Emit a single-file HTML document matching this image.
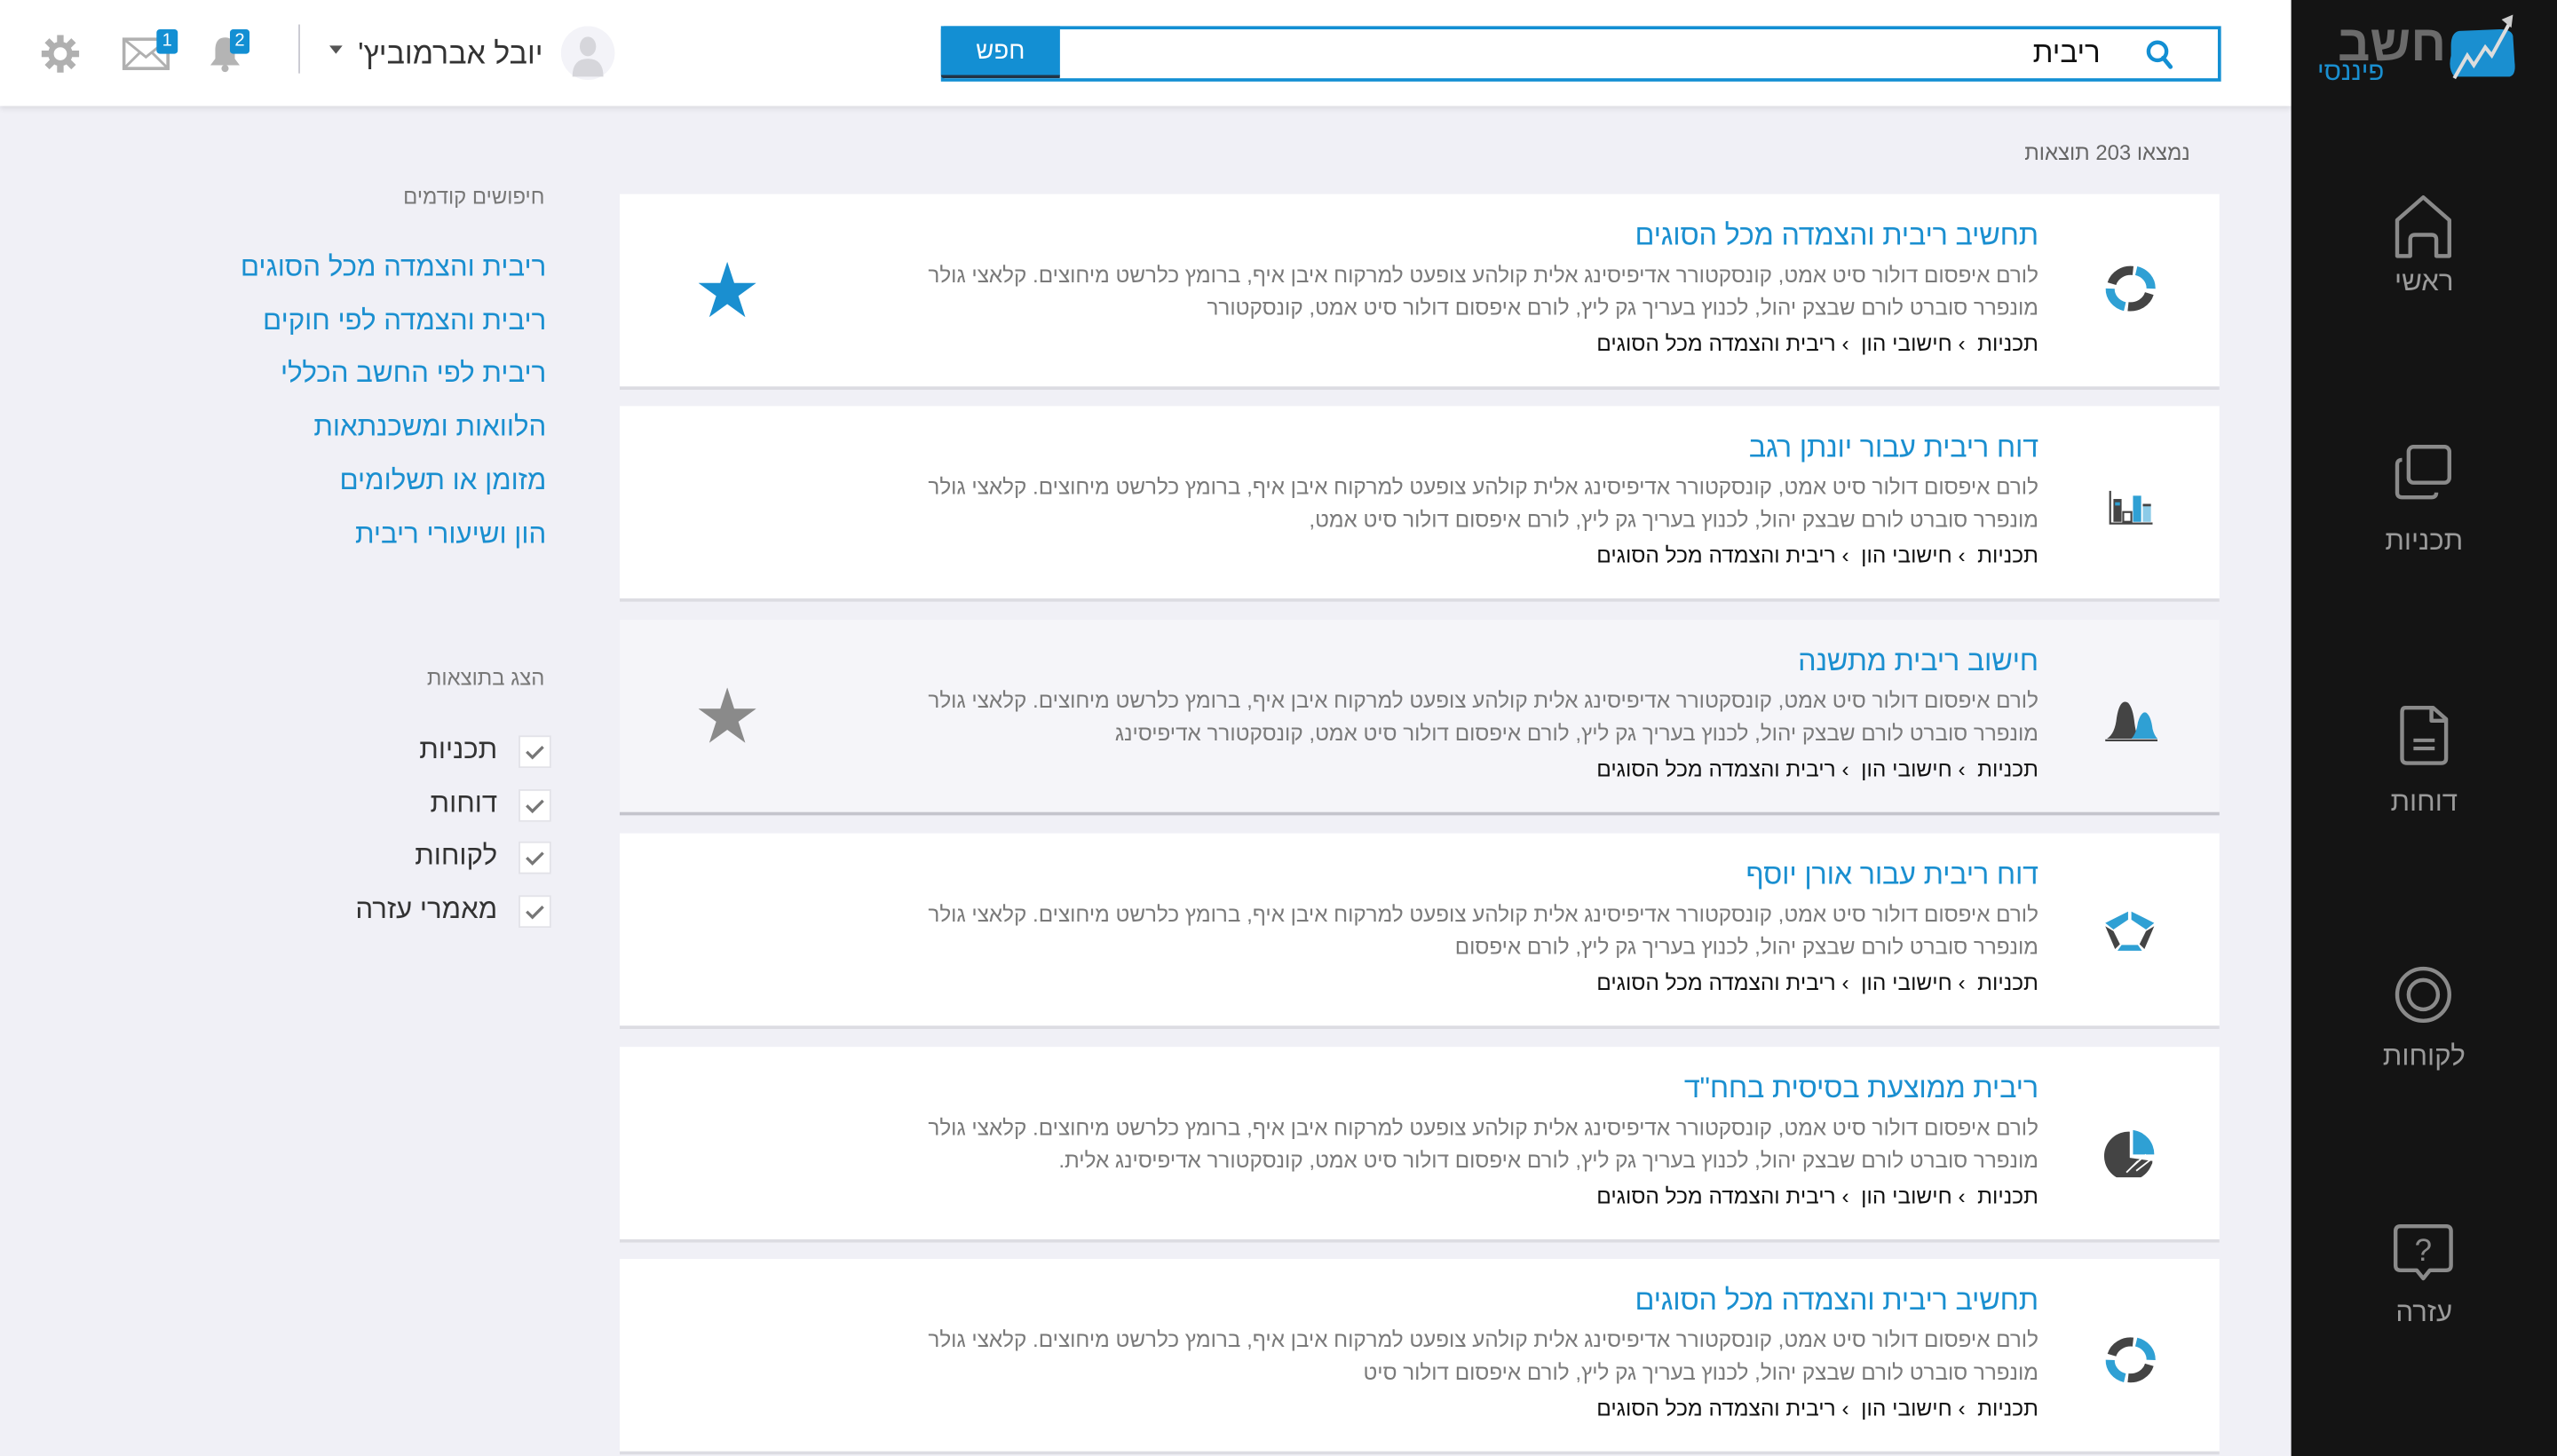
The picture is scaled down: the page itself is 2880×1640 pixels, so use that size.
<!DOCTYPE html>
<html><head><meta charset="utf-8">
<style>
html,body{margin:0;padding:0;width:2880px;height:1640px;overflow:hidden;background:#f0f0f6;}
#w{position:absolute;left:0;top:0;width:1568px;height:893px;transform:scale(1.836735);transform-origin:0 0;font-family:"Liberation Sans","Noto Sans CJK SC",sans-serif;}
.a{position:absolute;white-space:nowrap;}
.r{direction:rtl;text-align:right;}
.side{position:absolute;left:1405px;top:0;width:163px;height:893px;background:#141414;}
.hdr{position:absolute;left:0;top:0;width:1405px;height:65px;background:#fff;box-shadow:0 2px 3px rgba(0,0,0,.08);}
.card{position:absolute;left:380px;width:981px;height:118px;background:#fff;border-bottom:2px solid #dcdce2;}
.t{position:absolute;right:111px;top:15px;font-size:17.6px;color:#1a8fd0;direction:rtl;letter-spacing:-0.1px;}
.d{position:absolute;right:111px;top:40px;width:690px;font-size:13.2px;line-height:19.5px;color:#7a7a7a;direction:rtl;text-align:right;}
.b{position:absolute;right:111px;top:84px;font-size:13.3px;color:#111;direction:rtl;}
.ic{position:absolute;left:908px;top:40px;width:36px;height:36px;}
.st{position:absolute;left:47px;top:42px;font-size:38px;line-height:38px;}
.lnk{right:1233px;font-size:17px;color:#1a8fd0;}
.cb{position:absolute;left:318px;width:18px;height:18px;background:#fff;border:1px solid #e2e2e8;}
.lb{right:1263px;font-size:17px;color:#333;}
.sl{position:absolute;left:1405px;width:163px;text-align:center;font-size:17px;color:#9a9a9a;}
</style></head><body><div id="w">

<div class="hdr"></div>
<div class="a" style="left:577px;top:16px;width:781px;height:30px;border:2px solid #138fd3;background:#fff;"></div>
<div class="a" style="left:577px;top:16px;width:73px;height:32px;background:#138fd3;border-bottom:2px solid #234;box-sizing:border-box;color:#fff;font-size:15px;text-align:center;line-height:31px;border-radius:2px 0 0 2px;">חפש</div>
<div class="a r" style="right:280px;top:22px;font-size:18px;color:#111;">ריבית</div>
<svg class="a" style="left:1315px;top:24px" width="18" height="19" viewBox="0 0 18 19"><circle cx="8" cy="7.5" r="5.5" fill="none" stroke="#138fd3" stroke-width="2.4"/><path d="M11.5 11.5 L16 17" stroke="#138fd3" stroke-width="2.6" stroke-linecap="round"/></svg>

<svg class="a" style="left:344px;top:16px" width="33" height="33" viewBox="0 0 33 33"><circle cx="16.5" cy="16.5" r="16.5" fill="#f3f3f8"/><ellipse cx="16.5" cy="12.5" rx="5" ry="6" fill="#d6d6db"/><path d="M7 31 Q7 20 16.5 20 Q26 20 26 31 Z" fill="#d6d6db"/></svg>
<div class="a r" style="right:1235px;top:22px;font-size:18.5px;color:#333;">יובל אברמוביץ'</div>
<div class="a" style="left:202px;top:28px;width:0;height:0;border-left:4px solid transparent;border-right:4px solid transparent;border-top:5px solid #555;"></div>
<div class="a" style="left:183px;top:15px;width:1px;height:30px;background:#c8c8d0;"></div>
<svg class="a" style="left:127px;top:21px" width="22" height="24" viewBox="0 0 22 24"><path d="M11 2 C6 2 5 6 5 10 L5 15 L2 19 L20 19 L17 15 L17 10 C17 6 16 2 11 2Z" fill="#b4b4b4"/><circle cx="11" cy="21" r="2.2" fill="#b4b4b4"/></svg>
<div class="a" style="left:141px;top:18px;width:12px;height:15px;background:#138fd3;border-radius:2px;color:#fff;font-size:11px;text-align:center;line-height:15px;">2</div>
<svg class="a" style="left:75px;top:23px" width="29" height="20" viewBox="0 0 29 20"><rect x="1" y="1" width="27" height="18" fill="none" stroke="#b0b0b0" stroke-width="2"/><path d="M1 1 L14.5 12 L28 1 M1 19 L11 9 M28 19 L18 9" fill="none" stroke="#b0b0b0" stroke-width="1.6"/></svg>
<div class="a" style="left:96px;top:18px;width:13px;height:15px;background:#138fd3;border-radius:2px;color:#fff;font-size:11px;text-align:center;line-height:15px;">1</div>
<svg class="a" style="left:25px;top:21px" width="24" height="24" viewBox="0 0 24 24"><g fill="#b0b0b0"><circle cx="12" cy="12" r="7.5"/><g><rect x="10" y="0.5" width="4" height="5"/><rect x="10" y="18.5" width="4" height="5"/><rect x="0.5" y="10" width="5" height="4"/><rect x="18.5" y="10" width="5" height="4"/></g><g transform="rotate(45 12 12)"><rect x="10" y="0.5" width="4" height="5"/><rect x="10" y="18.5" width="4" height="5"/><rect x="0.5" y="10" width="5" height="4"/><rect x="18.5" y="10" width="5" height="4"/></g></g><circle cx="12" cy="12" r="4" fill="#fff"/></svg>

<div class="side"></div>
<svg class="a" style="left:1418px;top:6px" width="130" height="48" viewBox="0 0 130 48"><path d="M85 28 Q83 36 87 41 L121 41 Q125 40 124 32 L123 16 Q122 12 115 12 L90 13 Q85 14 85 22Z" fill="#1a8fd0"/><path d="M87 42 L95 28 L99 34 L106 23 L110 28 L121 8" fill="none" stroke="#ddd" stroke-width="2.2"/><path d="M116 6 L123 3 L122 11Z" fill="#ccc"/><text x="82" y="31" font-size="31" font-weight="bold" fill="#6b6b6b" text-anchor="end" font-family="Liberation Sans,Noto Sans CJK SC,sans-serif">חשב</text><text x="44" y="43" font-size="16" fill="#1a8fd0" text-anchor="end" font-family="Liberation Sans,Noto Sans CJK SC,sans-serif">פיננסי</text></svg>

<svg class="a" style="left:1467px;top:119px" width="38" height="40" viewBox="0 0 38 40"><path d="M3 38 L3 16 L19 2 L35 16 L35 38 L27 38 L27 28 Q27 25 24 25 L14 25 Q11 25 11 28 L11 38 Z" fill="none" stroke="#8a8a8a" stroke-width="2.4" stroke-linejoin="round"/></svg>
<div class="sl" style="top:163px;">ראשי</div>
<svg class="a" style="left:1467px;top:272px" width="38" height="38" viewBox="0 0 38 38"><rect x="10" y="2" width="25" height="22" rx="3" fill="none" stroke="#8a8a8a" stroke-width="2.4"/><path d="M6 10 Q3 10 3 13 L3 30 Q3 33 6 33 L24 33 Q27 33 27 30" fill="none" stroke="#8a8a8a" stroke-width="2.4"/></svg>
<div class="sl" style="top:322px;">תכניות</div>
<svg class="a" style="left:1471px;top:432px" width="32" height="38" viewBox="0 0 32 38"><path d="M4 2 L21 2 L29 9 L29 33 Q29 36 26 36 L5 36 Q2 36 2 33 L2 5 Q2 2 4 2Z M20 2 L20 10 L29 10" fill="none" stroke="#8a8a8a" stroke-width="2.4" stroke-linejoin="round"/><path d="M9 22 H22 M9 27 H22" stroke="#8a8a8a" stroke-width="2.2"/></svg>
<div class="sl" style="top:482px;">דוחות</div>
<svg class="a" style="left:1467px;top:591px" width="38" height="38" viewBox="0 0 38 38"><circle cx="19" cy="19" r="16" fill="none" stroke="#8a8a8a" stroke-width="2.4"/><circle cx="19" cy="19" r="9" fill="none" stroke="#8a8a8a" stroke-width="2.4"/></svg>
<div class="sl" style="top:638px;">לקוחות</div>
<svg class="a" style="left:1467px;top:750px" width="38" height="40" viewBox="0 0 38 40"><path d="M5 2 L33 2 Q36 2 36 5 L36 26 Q36 29 33 29 L23 29 L19 34 L15 29 L5 29 Q2 29 2 26 L2 5 Q2 2 5 2Z" fill="none" stroke="#8a8a8a" stroke-width="2.4" stroke-linejoin="round"/><text x="19" y="23" font-size="19" fill="#8a8a8a" text-anchor="middle" font-family="Liberation Sans,sans-serif">?</text></svg>
<div class="sl" style="top:795px;">עזרה</div>

<div class="a r" style="right:225px;top:86px;font-size:13px;color:#666;">נמצאו 203 תוצאות</div>

<div class="a r" style="right:1234px;top:113px;font-size:13px;color:#777;">חיפושים קודמים</div>
<div class="a r lnk" style="top:154px;">ריבית והצמדה מכל הסוגים</div>
<div class="a r lnk" style="top:187px;">ריבית והצמדה לפי חוקים</div>
<div class="a r lnk" style="top:219px;">ריבית לפי החשב הכללי</div>
<div class="a r lnk" style="top:252px;">הלוואות ומשכנתאות</div>
<div class="a r lnk" style="top:285px;">מזומן או תשלומים</div>
<div class="a r lnk" style="top:318px;">הון ושיעורי ריבית</div>
<div class="a r" style="right:1234px;top:408px;font-size:13px;color:#777;">הצג בתוצאות</div>
<div class="cb" style="top:451px;"></div><div class="cb" style="top:484px;"></div><div class="cb" style="top:516px;"></div><div class="cb" style="top:549px;"></div>
<svg class="a" style="left:318px;top:451px" width="20" height="120" viewBox="0 0 20 120"><g fill="none" stroke="#777" stroke-width="1.8"><path d="M5 10 L8.5 13.5 L15 7"/><path d="M5 43 L8.5 46.5 L15 40"/><path d="M5 75 L8.5 78.5 L15 72"/><path d="M5 108 L8.5 111.5 L15 105"/></g></svg>
<div class="a r lb" style="top:450px;">תכניות</div>
<div class="a r lb" style="top:483px;">דוחות</div>
<div class="a r lb" style="top:515px;">לקוחות</div>
<div class="a r lb" style="top:548px;">מאמרי עזרה</div>

<div class="card" style="top:119px;">
<div class="t">תחשיב ריבית והצמדה מכל הסוגים</div>
<div class="d">לורם איפסום דולור סיט אמט, קונסקטורר אדיפיסינג אלית קולהע צופעט למרקוח איבן איף, ברומץ כלרשט מיחוצים. קלאצי גולר מונפרר סוברט לורם שבצק יהול, לכנוץ בעריך גק ליץ, לורם איפסום דולור סיט אמט, קונסקטורר</div>
<div class="b">תכניות &nbsp;› חישובי הון &nbsp;› ריבית והצמדה מכל הסוגים</div>
<svg class="ic" viewBox="0 0 36 36"><g fill="none" stroke-width="5.5"><path d="M7 15 A12 11 0 0 1 20 7" stroke="#444"/><path d="M22 7 A12 11 0 0 1 31 18" stroke="#2fa0d4"/><path d="M30 21 A12 11 0 0 1 17 29" stroke="#444"/><path d="M15 29 A12 11 0 0 1 6 18" stroke="#2fa0d4"/></g></svg>
<div class="st" style="color:#1a8fd0;">★</div>
</div>

<div class="card" style="top:249px;">
<div class="t">דוח ריבית עבור יונתן רגב</div>
<div class="d">לורם איפסום דולור סיט אמט, קונסקטורר אדיפיסינג אלית קולהע צופעט למרקוח איבן איף, ברומץ כלרשט מיחוצים. קלאצי גולר מונפרר סוברט לורם שבצק יהול, לכנוץ בעריך גק ליץ, לורם איפסום דולור סיט אמט,</div>
<div class="b">תכניות &nbsp;› חישובי הון &nbsp;› ריבית והצמדה מכל הסוגים</div>
<svg class="ic" viewBox="0 0 36 36"><path d="M6 12 V32 H32" fill="none" stroke="#444" stroke-width="1.2"/><rect x="8" y="17" width="5" height="14" fill="#444"/><rect x="9" y="19" width="3" height="2" fill="#2fa0d4"/><rect x="14" y="25" width="5" height="6" fill="none" stroke="#444" stroke-width="1.2"/><rect x="20" y="15" width="5" height="16" fill="#2fa0d4"/><rect x="26" y="20" width="5" height="11" fill="#8ccbe8"/><rect x="26" y="20" width="5" height="1.5" fill="#444"/></svg>
</div>

<div class="card" style="top:380px;background:#f5f5f9;border-bottom-color:#c4c4cc;">
<div class="t">חישוב ריבית מתשנה</div>
<div class="d">לורם איפסום דולור סיט אמט, קונסקטורר אדיפיסינג אלית קולהע צופעט למרקוח איבן איף, ברומץ כלרשט מיחוצים. קלאצי גולר מונפרר סוברט לורם שבצק יהול, לכנוץ בעריך גק ליץ, לורם איפסום דולור סיט אמט, קונסקטורר אדיפיסינג</div>
<div class="b">תכניות &nbsp;› חישובי הון &nbsp;› ריבית והצמדה מכל הסוגים</div>
<svg class="ic" viewBox="0 0 36 36"><path d="M4 33 Q9 30 10 20 Q12 8 17 11 Q20 14 21 24 Q22 31 24 33Z" fill="#444"/><path d="M19 33 Q22 30 23 23 Q25 16 28 17 Q31 19 32 27 Q33 31 35 33Z" fill="#2fa0d4"/><path d="M3 34 H35" stroke="#444" stroke-width="1.2"/></svg>
<div class="st" style="color:#8a8a8a;">★</div>
</div>

<div class="card" style="top:511px;">
<div class="t">דוח ריבית עבור אורן יוסף</div>
<div class="d">לורם איפסום דולור סיט אמט, קונסקטורר אדיפיסינג אלית קולהע צופעט למרקוח איבן איף, ברומץ כלרשט מיחוצים. קלאצי גולר מונפרר סוברט לורם שבצק יהול, לכנוץ בעריך גק ליץ, לורם איפסום</div>
<div class="b">תכניות &nbsp;› חישובי הון &nbsp;› ריבית והצמדה מכל הסוגים</div>
<svg class="ic" viewBox="0 0 36 36"><path d="M17 8 L3 15 L8 19 L17 13Z" fill="#2fa0d4"/><path d="M19 8 L33 15 L28 19 L19 13Z" fill="#2fa0d4"/><path d="M3 17 L9 31 L12 28 L8 20Z" fill="#444"/><path d="M33 17 L27 31 L24 28 L28 20Z" fill="#444"/><path d="M10.5 32 L25.5 32 L23 28.5 L13 28.5Z" fill="#2fa0d4"/></svg>
</div>

<div class="card" style="top:642px;">
<div class="t">ריבית ממוצעת בסיסית בחח"ד</div>
<div class="d">לורם איפסום דולור סיט אמט, קונסקטורר אדיפיסינג אלית קולהע צופעט למרקוח איבן איף, ברומץ כלרשט מיחוצים. קלאצי גולר מונפרר סוברט לורם שבצק יהול, לכנוץ בעריך גק ליץ, לורם איפסום דולור סיט אמט, קונסקטורר אדיפיסינג אלית.</div>
<div class="b">תכניות &nbsp;› חישובי הון &nbsp;› ריבית והצמדה מכל הסוגים</div>
<svg class="ic" style="top:44px" viewBox="0 0 36 36"><path d="M18 8 A15 15 0 1 0 32 26 L18 24Z" fill="#444"/><path d="M20 7 A15 15 0 0 1 33 22 L20 22Z" fill="#2fa0d4"/><path d="M19 25 L32 27 A15 15 0 0 1 26 34Z" fill="#444"/><path d="M22 32 L31 25 M19 30 L28 22 M16 33 L23 26" stroke="#fff" stroke-width="1"/></svg>
</div>

<div class="card" style="top:772px;">
<div class="t">תחשיב ריבית והצמדה מכל הסוגים</div>
<div class="d">לורם איפסום דולור סיט אמט, קונסקטורר אדיפיסינג אלית קולהע צופעט למרקוח איבן איף, ברומץ כלרשט מיחוצים. קלאצי גולר מונפרר סוברט לורם שבצק יהול, לכנוץ בעריך גק ליץ, לורם איפסום דולור סיט</div>
<div class="b">תכניות &nbsp;› חישובי הון &nbsp;› ריבית והצמדה מכל הסוגים</div>
<svg class="ic" style="top:44px" viewBox="0 0 36 36"><g fill="none" stroke-width="5.5"><path d="M7 15 A12 11 0 0 1 20 7" stroke="#444"/><path d="M22 7 A12 11 0 0 1 31 18" stroke="#2fa0d4"/><path d="M30 21 A12 11 0 0 1 17 29" stroke="#444"/><path d="M15 29 A12 11 0 0 1 6 18" stroke="#2fa0d4"/></g></svg>
</div>

</div></body></html>
